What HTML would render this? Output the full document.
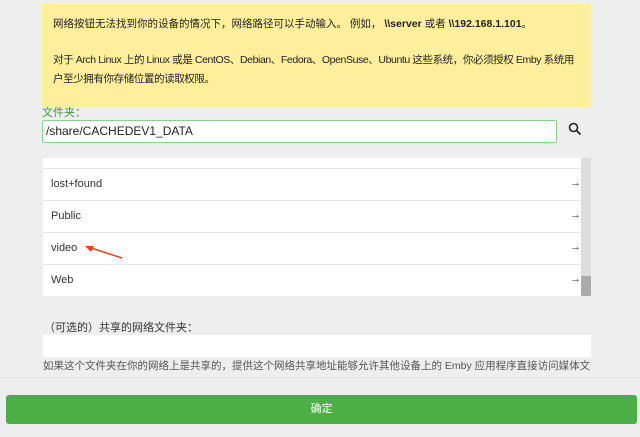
<!DOCTYPE html>
<html><head><meta charset="utf-8"><style>
body{margin:0;width:640px;height:437px;background:#eeeeee;font-family:"Liberation Sans","Noto Sans CJK SC",sans-serif;position:relative;overflow:hidden;color:#222}
.a{position:absolute}
.yel{left:42px;top:4px;width:549px;height:103px;background:#ffef9c;font-size:10.5px;color:#222}
.row{position:absolute;left:0;width:538px;height:31px;border-top:1px solid #e6e6e6;font-size:11px;color:#333}
.row span{position:absolute;left:8px;top:9px}
.row i{position:absolute;right:0px;top:8px;font-style:normal;font-size:11px}
</style></head><body>
<div class="a yel">
<div class="a" style="left:11px;top:12px;white-space:nowrap">网络按钮无法找到你的设备的情况下，网络路径可以手动输入。 例如， <b>\\server</b> 或者 <b>\\192.168.1.101</b>。</div>
<div class="a" style="left:11px;top:47px;white-space:nowrap;line-height:19px;letter-spacing:-0.4px">对于 Arch Linux 上的 Linux 或是 CentOS、Debian、Fedora、OpenSuse、Ubuntu 这些系统，你必须授权 Emby 系统用<br>户至少拥有你存储位置的读取权限。</div>
</div>
<div class="a" style="left:42px;top:104px;font-size:11px;color:#3a9a3a">文件夹：</div>
<div class="a" style="left:42px;top:120px;width:513px;height:21px;background:#fff;border:1px solid #8fcf8f;border-radius:2px;font-size:12px;line-height:21px;text-indent:3px;color:#222">/share/CACHEDEV1_DATA</div>
<svg class="a" style="left:568px;top:122px" width="14" height="14" viewBox="0 0 14 14"><circle cx="5.5" cy="5.5" r="4" fill="none" stroke="#222" stroke-width="1.6"/><line x1="8.5" y1="8.5" x2="12.5" y2="12.5" stroke="#222" stroke-width="1.8"/></svg>
<div class="a" style="left:43px;top:158px;width:548px;height:138px;background:#fff;overflow:hidden">
<div class="row" style="top:10px"><span>lost+found</span><i>→</i></div>
<div class="row" style="top:42px"><span>Public</span><i>→</i></div>
<div class="row" style="top:74px"><span>video</span><i>→</i></div>
<div class="row" style="top:106px"><span>Web</span><i>→</i></div>
<div class="a" style="left:538px;top:0;width:10px;height:138px;background:#ddd"></div>
<div class="a" style="left:538px;top:118px;width:10px;height:20px;background:#aaa;border-radius:2px"></div>
</div>
<svg class="a" style="left:84px;top:243px" width="42" height="18"><line x1="4" y1="4" x2="38" y2="15" stroke="#e8401c" stroke-width="1.5"/><polygon points="1,3 10,3 7,9" fill="#e8401c"/></svg>
<div class="a" style="left:44px;top:319px;font-size:11px;color:#333">（可选的）共享的网络文件夹：</div>
<div class="a" style="left:43px;top:335px;width:548px;height:22px;background:#fff"></div>
<div class="a" style="left:43px;top:358px;font-size:10.5px;color:#555;white-space:nowrap">如果这个文件夹在你的网络上是共享的，提供这个网络共享地址能够允许其他设备上的 Emby 应用程序直接访问媒体文</div>
<div class="a" style="left:0;top:377px;width:640px;height:1px;background:#e2e2e2"></div>
<div class="a" style="left:6px;top:395px;width:631px;height:29px;background:#4caf45;border-radius:3px;color:#fff;font-size:11px;text-align:center;line-height:29px">确定</div>
</body></html>
